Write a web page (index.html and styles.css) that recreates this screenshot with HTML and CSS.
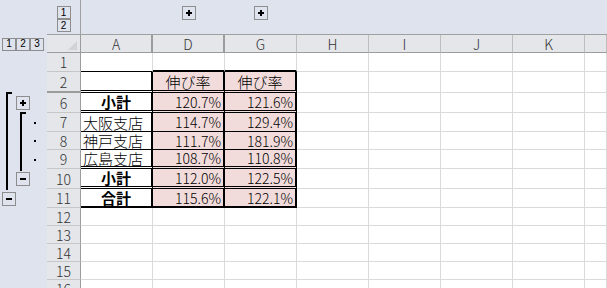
FILE: index.html
```html
<!DOCTYPE html>
<html lang="ja">
<head>
    <meta charset="UTF-8">
    <meta name="viewport" content="width=device-width, initial-scale=1.0">
    <title>Book1</title>
    <link rel="stylesheet" href="styles.css">
</head>
<body>
<div class="sheet">
    <!-- outline bars -->
    <div class="bar"></div>
    <div class="lv-top"><span class="lvl">1</span><span class="lvl">2</span></div>
    <div class="col-line"></div>
    <svg class="obox col-btn col-d" width="14" height="14"><rect x="0.5" y="0.5" width="13" height="13" fill="none" stroke="#8d8d8d"/><path d="M4 6h6v2H4zM6 4h2v6H6z"/></svg>
    <svg class="obox col-btn col-g" width="14" height="14"><rect x="0.5" y="0.5" width="13" height="13" fill="none" stroke="#8d8d8d"/><path d="M4 6h6v2H4zM6 4h2v6H6z"/></svg>

    <div class="side"></div>
    <div class="lv-left"><span class="lvl">1</span><span class="lvl">2</span><span class="lvl">3</span></div>
    <div class="bracket br-outer"></div>
    <div class="bracket br-inner"></div>
    <svg class="obox ob-r6" width="14" height="14"><rect x="0.5" y="0.5" width="13" height="13" fill="none" stroke="#8d8d8d"/><path d="M4 6h6v2H4zM6 4h2v6H6z"/></svg>
    <span class="dot d7"></span>
    <span class="dot d8"></span>
    <span class="dot d9"></span>
    <svg class="obox ob-r10" width="14" height="14"><rect x="0.5" y="0.5" width="13" height="13" fill="none" stroke="#8d8d8d"/><path d="M4 6h6v2H4z"/></svg>
    <svg class="obox ob-r11" width="14" height="14"><rect x="0.5" y="0.5" width="13" height="13" fill="none" stroke="#8d8d8d"/><path d="M4 6h6v2H4z"/></svg>

    <!-- column headers -->
    <div class="corner"><svg width="9" height="9"><polygon points="9,0 9,9 0,9" fill="#cfd2d6"/></svg></div>
    <div class="ch hid">A</div><div class="ch hid">D</div><div class="ch">G</div><div class="ch">H</div><div class="ch">I</div><div class="ch">J</div><div class="ch">K</div><div class="ch"></div>

    <!-- rows -->
    <div class="rh">1</div>
    <div class="c b1"></div><div class="c b2"></div><div class="c b2"></div><div class="c"></div><div class="c"></div><div class="c"></div><div class="c"></div><div class="c"></div>

    <div class="rh hid">2</div>
    <div class="c tb b3"></div><div class="c tb pk b3 mid">伸び率</div><div class="c tb pk b3 mid">伸び率</div><div class="c"></div><div class="c"></div><div class="c"></div><div class="c"></div><div class="c"></div>

    <div class="rh">6</div>
    <div class="c tb b3 mid bold">小計</div><div class="c tb pk b3 num">120.7%</div><div class="c tb pk b3 num">121.6%</div><div class="c"></div><div class="c"></div><div class="c"></div><div class="c"></div><div class="c"></div>

    <div class="rh">7</div>
    <div class="c tb b1">大阪支店</div><div class="c tb pk b1 num">114.7%</div><div class="c tb pk b1 num">129.4%</div><div class="c"></div><div class="c"></div><div class="c"></div><div class="c"></div><div class="c"></div>

    <div class="rh">8</div>
    <div class="c tb b1">神戸支店</div><div class="c tb pk b1 num">111.7%</div><div class="c tb pk b1 num">181.9%</div><div class="c"></div><div class="c"></div><div class="c"></div><div class="c"></div><div class="c"></div>

    <div class="rh">9</div>
    <div class="c tb b3">広島支店</div><div class="c tb pk b3 num">108.7%</div><div class="c tb pk b3 num">110.8%</div><div class="c"></div><div class="c"></div><div class="c"></div><div class="c"></div><div class="c"></div>

    <div class="rh">10</div>
    <div class="c tb b3 mid bold">小計</div><div class="c tb pk b3 num">112.0%</div><div class="c tb pk b3 num">122.5%</div><div class="c"></div><div class="c"></div><div class="c"></div><div class="c"></div><div class="c"></div>

    <div class="rh">11</div>
    <div class="c tb b2 mid bold">合計</div><div class="c tb pk b2 num">115.6%</div><div class="c tb pk b2 num">122.1%</div><div class="c"></div><div class="c"></div><div class="c"></div><div class="c"></div><div class="c"></div>

    <div class="rh">12</div>
    <div class="c"></div><div class="c"></div><div class="c"></div><div class="c"></div><div class="c"></div><div class="c"></div><div class="c"></div><div class="c"></div>

    <div class="rh">13</div>
    <div class="c"></div><div class="c"></div><div class="c"></div><div class="c"></div><div class="c"></div><div class="c"></div><div class="c"></div><div class="c"></div>

    <div class="rh">14</div>
    <div class="c"></div><div class="c"></div><div class="c"></div><div class="c"></div><div class="c"></div><div class="c"></div><div class="c"></div><div class="c"></div>

    <div class="rh">15</div>
    <div class="c"></div><div class="c"></div><div class="c"></div><div class="c"></div><div class="c"></div><div class="c"></div><div class="c"></div><div class="c"></div>

    <div class="rh">16</div>
    <div class="c"></div><div class="c"></div><div class="c"></div><div class="c"></div><div class="c"></div><div class="c"></div><div class="c"></div><div class="c"></div>
</div>
</body>
</html>
```

FILE: styles.css
```css
body {
    margin: 0;
    background-color: #fff;
    font-family: "Noto Sans CJK JP", sans-serif;
    overflow: hidden;
}

.sheet {
    display: grid;
    grid-template-columns: 47px 34px repeat(7, 72px) 1fr;
    grid-template-rows: 35px 18px 19px 21px 20px 19px 18px 19px 20px 19px 18px 18px 18px 18px 18px;
    width: 607px;
    height: 288px;
    overflow: hidden;
}

.sheet > * {
    box-sizing: border-box;
    min-width: 0;
    min-height: 0;
}

/* outline area */
.bar {
    grid-row: 1;
    grid-column: 1 / -1;
    background-color: #dfe3ee;
}

.side {
    grid-row: 2 / -1;
    grid-column: 1;
    background-color: #dfe3ee;
}

.lv-top {
    grid-row: 1;
    grid-column: 2;
    border-right: 1px solid #a0a0a0;
    border-bottom: 1px solid #a0a0a0;
    display: flex;
    flex-direction: column;
    align-items: center;
    padding-top: 6px;
}

.col-line {
    grid-row: 1;
    grid-column: 3 / -1;
    border-bottom: 1px solid #a0a0a0;
}

.lv-left {
    grid-row: 2;
    grid-column: 1;
    display: flex;
    align-items: center;
    padding-left: 2px;
}

.lvl {
    box-sizing: border-box;
    width: 14px;
    height: 13px;
    border: 1px solid #8d8d8d;
    font: 10px/1 "Liberation Sans", sans-serif;
    color: #000;
    display: flex;
    align-items: center;
    justify-content: center;
}

.obox {
    grid-column: 1;
    align-self: center;
    justify-self: start;
}

.col-btn {
    grid-row: 1;
    align-self: start;
    justify-self: center;
    margin-top: 6px;
}

.col-d { grid-column: 4; }
.col-g { grid-column: 5; }

.ob-r6 { grid-row: 5; margin-left: 16px; }
.ob-r10 { grid-row: 9; margin-left: 16px; }
.ob-r11 { grid-row: 10; margin-left: 2px; }

.bracket {
    grid-column: 1;
    justify-self: start;
    width: 6px;
    border-left: 2px solid #000;
    border-top: 2px solid #000;
}

.br-outer {
    grid-row: 5 / 10;
    margin: -1px 0 -1px 6px;
}

.br-inner {
    grid-row: 6 / 9;
    margin: -1px 0 -2px 20px;
}

.dot {
    grid-column: 1;
    align-self: center;
    justify-self: start;
    margin-left: 34px;
    width: 2px;
    height: 2px;
    background-color: #000;
}

.d7 { grid-row: 6; }
.d8 { grid-row: 7; }
.d9 { grid-row: 8; }

/* headers */
.corner {
    background-color: #e4e6ea;
    border-right: 1px solid #9c9c9c;
    border-bottom: 1px solid #9c9c9c;
    display: flex;
    justify-content: flex-end;
    align-items: flex-end;
    padding: 0 3px 2px 0;
}

.corner svg {
    display: block;
}

.ch {
    background-color: #e4e6ea;
    border-right: 1px solid #bdbdbd;
    border-bottom: 1px solid #9c9c9c;
    display: flex;
    align-items: center;
    justify-content: center;
    font-size: 14px;
    font-weight: 300;
    line-height: 1;
    color: #333;
}

.ch.hid {
    border-right: 2px solid #9c9c9c;
}

.rh {
    background-color: #e4e6ea;
    border-right: 1px solid #9c9c9c;
    border-bottom: 1px solid #c6c6c6;
    display: flex;
    align-items: center;
    justify-content: center;
    font-size: 14px;
    font-weight: 300;
    line-height: 1;
    color: #333;
}

.rh.hid {
    border-bottom: 2px solid #9c9c9c;
}

/* cells */
.c {
    background-color: #fff;
    border-right: 1px solid #dadada;
    border-bottom: 1px solid #dadada;
    display: flex;
    align-items: center;
    padding: 0 2px;
    font-size: 15px;
    font-weight: 300;
    line-height: 1;
    color: #000;
    white-space: nowrap;
    overflow: hidden;
}

.tb { border-right: 2px solid #000; }
.pk { background-color: #f2dcdb; }
.num { justify-content: flex-end; font-size: 14px; }
.mid { justify-content: center; }
.c.bold { font-weight: 700; }

.b1 { border-bottom: 1px solid #000; }
.b2 { border-bottom: 2px solid #000; }
.b3 { border-bottom: 3px double #000; }
```
